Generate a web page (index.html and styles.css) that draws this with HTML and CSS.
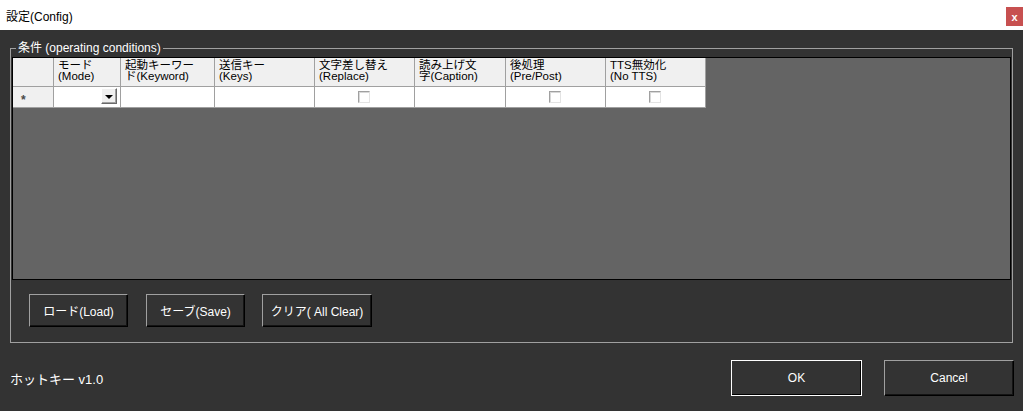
FILE: index.html
```html
<!DOCTYPE html>
<html lang="ja">
<head>
<meta charset="utf-8">
<title>設定(Config)</title>
<link rel="stylesheet" href="styles.css">
</head>
<body>
<div class="window">
  <div class="titlebar">
    <span class="title">設定(Config)</span>
    <span class="close">x</span>
  </div>
  <div class="content">
    <div class="group">
      <span class="legend">条件 (operating conditions)</span>
      <div class="grid">
        <div class="row head">
          <div class="cell rowhead"></div>
          <div class="cell"><span class="line">モード</span><span class="line">(Mode)</span></div>
          <div class="cell"><span class="line">起動キーワー</span><span class="line">ド(Keyword)</span></div>
          <div class="cell"><span class="line">送信キー</span><span class="line">(Keys)</span></div>
          <div class="cell"><span class="line">文字差し替え</span><span class="line">(Replace)</span></div>
          <div class="cell"><span class="line">読み上げ文</span><span class="line">字(Caption)</span></div>
          <div class="cell"><span class="line">後処理</span><span class="line">(Pre/Post)</span></div>
          <div class="cell"><span class="line">TTS無効化</span><span class="line">(No TTS)</span></div>
        </div>
        <div class="row data">
          <div class="cell rowhead"><span class="newrow">*</span></div>
          <div class="cell combo-cell"><span class="combo"><span class="arrow"></span></span></div>
          <div class="cell"></div>
          <div class="cell"></div>
          <div class="cell check-cell"><span class="check"></span></div>
          <div class="cell"></div>
          <div class="cell check-cell"><span class="check"></span></div>
          <div class="cell check-cell"><span class="check"></span></div>
        </div>
      </div>
      <div class="actions">
        <button class="btn btn-load">ロード(Load)</button>
        <button class="btn btn-save">セーブ(Save)</button>
        <button class="btn btn-clear">クリア( All Clear)</button>
      </div>
    </div>
    <div class="footer">
      <span class="version">ホットキー v1.0</span>
      <div class="dialog-buttons">
        <button class="btn btn-dialog btn-default">OK</button>
        <button class="btn btn-dialog btn-cancel">Cancel</button>
      </div>
    </div>
  </div>
</div>
</body>
</html>
```

FILE: styles.css
```css
html, body {
  margin: 0;
  width: 1023px;
  height: 411px;
  overflow: hidden;
  background: #333333;
}

body {
  font-family: "Liberation Sans", "Noto Sans CJK JP", sans-serif;
  font-size: 12px;
  color: #ffffff;
}

/* window caption */
.titlebar {
  height: 30px;
  background: #ffffff;
  display: flex;
  justify-content: space-between;
  align-items: center;
  padding-left: 6px;
  box-sizing: border-box;
}

.title {
  color: #000000;
  font-size: 12px;
}

.close {
  align-self: flex-start;
  margin-top: 7px;
  width: 17px;
  height: 19px;
  background: #c75050;
  color: #ffffff;
  font-weight: bold;
  font-size: 11px;
  display: flex;
  align-items: center;
  justify-content: center;
}

/* conditions group box */
.group {
  position: relative;
  margin: 18px 10px 0;
  border: 1px solid #a0a0a0;
  padding: 8px 1px 15px 1px;
}

.legend {
  position: absolute;
  left: 5px;
  top: -8px;
  padding: 0 2px;
  line-height: 14px;
  background: #333333;
  color: #ffffff;
}

/* data grid */
.grid {
  height: 221px;
  border: 1px solid #000000;
  background: #646464;
}

.row {
  display: grid;
  grid-template-columns: 41px 67px 94px 100px 100px 91px 100px 100px;
  width: 693px;
}

.cell {
  box-sizing: border-box;
  border-right: 1px solid #a0a0a0;
  border-bottom: 1px solid #a0a0a0;
  color: #000000;
  white-space: nowrap;
}

.head .cell {
  height: 29px;
  background: #f0f0f0;
  padding: 2px 0 0 4px;
  display: flex;
  flex-direction: column;
  overflow: hidden;
}

.head .line {
  display: block;
  height: 11px;
  line-height: 11px;
  font-size: 11.5px;
}

.data .cell {
  height: 21px;
  background: #ffffff;
}

.data .rowhead {
  background: #f0f0f0;
  display: flex;
  align-items: center;
  padding-left: 8px;
}

.newrow {
  font-size: 12px;
  font-weight: bold;
  color: #4a4a4a;
  line-height: 1;
  margin-top: 6px;
}

.combo-cell {
  display: flex;
  justify-content: flex-end;
  align-items: flex-start;
  padding: 1px 3px 0 0;
}

.combo {
  box-sizing: border-box;
  width: 16px;
  height: 16px;
  background: #f0f0f0;
  border: 1px solid;
  border-color: #ffffff #696969 #696969 #ffffff;
  box-shadow: inset -1px -1px 0 #a0a0a0;
  display: flex;
  align-items: center;
  justify-content: center;
}

.arrow {
  width: 0;
  height: 0;
  border-left: 4px solid transparent;
  border-right: 4px solid transparent;
  border-top: 4px solid #000000;
  margin-top: 1px;
}

.check-cell {
  display: flex;
  align-items: center;
  justify-content: center;
}

.check {
  box-sizing: border-box;
  width: 12px;
  height: 12px;
  background: #ffffff;
  border: 1px solid;
  border-color: #a0a0a0 #e3e3e3 #e3e3e3 #a0a0a0;
  box-shadow: inset 1px 1px 0 #d8d8d8;
  margin-left: -1px;
}

/* buttons */
.actions {
  display: flex;
  gap: 18px;
  margin-top: 14px;
  padding-left: 17px;
}

.btn {
  box-sizing: border-box;
  height: 33px;
  padding: 0;
  background: #333333;
  color: #ffffff;
  font: inherit;
  border: 1px solid;
  border-color: #a0a0a0 #000000 #000000 #a0a0a0;
  box-shadow: inset -1px -1px 0 #141414;
}

.btn-load,
.btn-save {
  width: 99px;
}

.btn-clear {
  width: 110px;
  margin-left: -1px;
}

/* dialog footer */
.footer {
  display: flex;
  align-items: center;
  justify-content: space-between;
  margin-top: 17px;
  padding: 0 9px 0 10px;
}

.version {
  font-size: 13px;
  color: #ffffff;
}

.dialog-buttons {
  display: flex;
  gap: 22px;
}

.btn-dialog {
  height: 36px;
  width: 130px;
}

.btn-default {
  width: 131px;
  border-color: #ffffff;
  box-shadow: inset -1px -1px 0 #000000;
}
```
